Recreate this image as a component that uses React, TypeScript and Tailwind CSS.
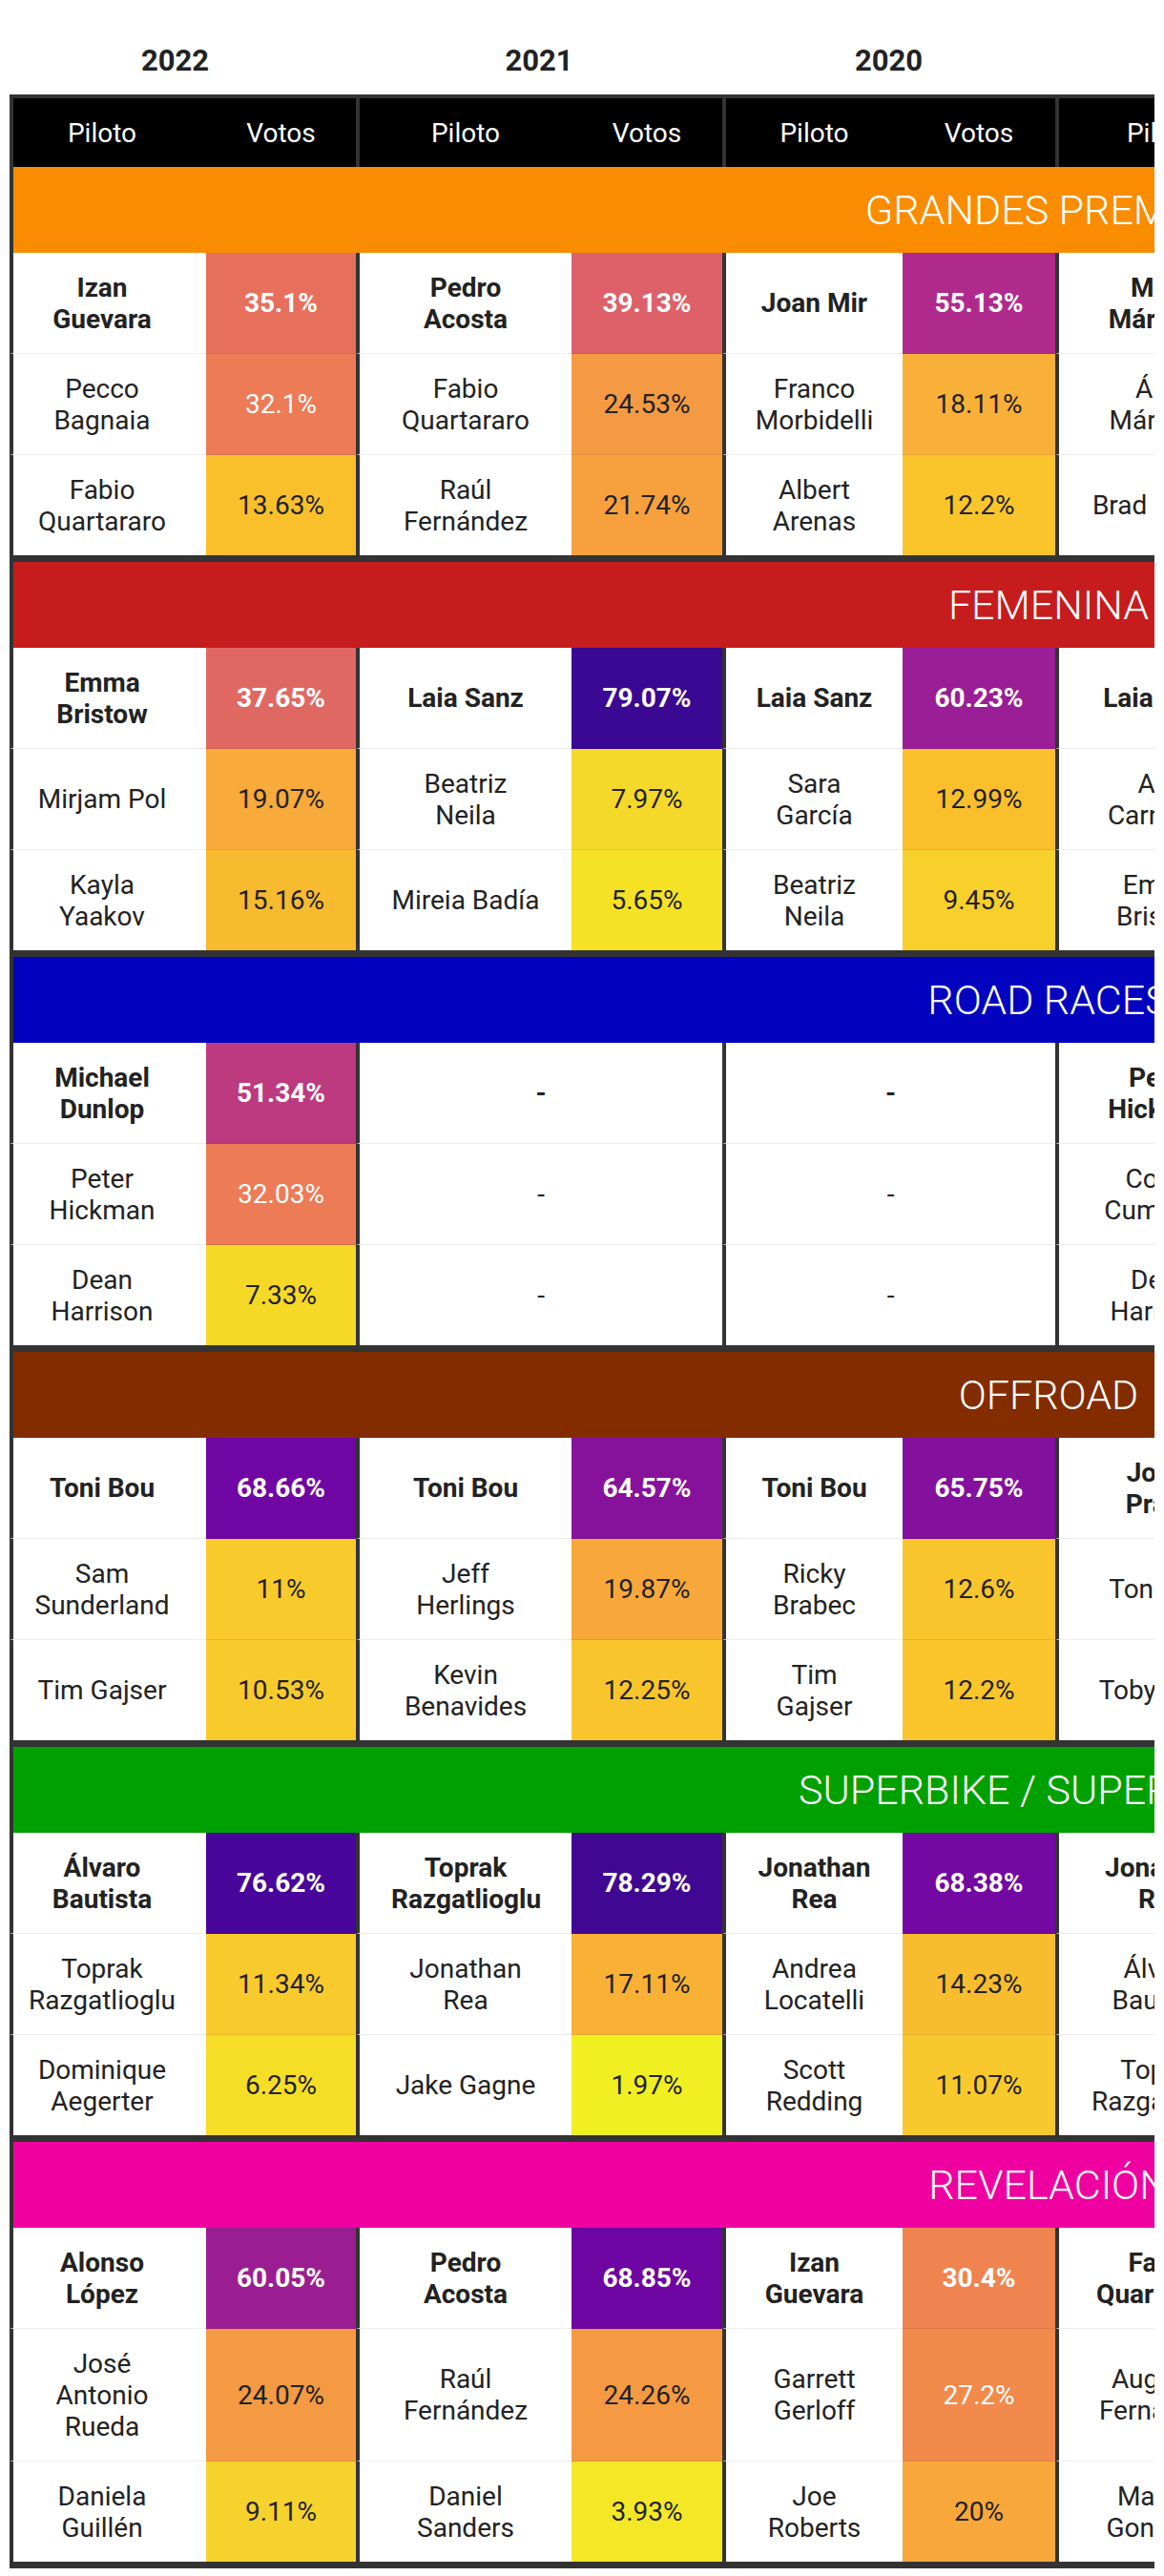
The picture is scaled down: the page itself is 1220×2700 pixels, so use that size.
type Entry = { name: string; pct?: string; bg?: string };
type Column = (Entry | null)[];
type Section = { title: string; bg: string; cols: Column[] };

const YEARS = ["2022", "2021", "2020", "2019"];

// anchos medidos de cada bloque de año (el último se sale de la vista)
const GROUPS = [
  { piloto: "w-[206px]", votos: "w-[157px]", pad: "pl-[14px] pr-[30px]", year: "pr-[16px]" },
  { piloto: "w-[226px]", votos: "w-[158px]", pad: "px-[33px]", year: "" },
  { piloto: "w-[189px]", votos: "w-[160px]", pad: "px-[28px]", year: "" },
  { piloto: "w-[218px]", votos: "", pad: "px-[34px]", year: "" },
];

const SECTIONS: Section[] = [
  {
    title: "GRANDES PREMIOS",
    bg: "bg-[#f98c00]",
    cols: [
      [
        { name: "Izan Guevara", pct: "35.1%", bg: "bg-[#e6705c]" },
        { name: "Pecco Bagnaia", pct: "32.1%", bg: "bg-[#ec7b56]" },
        { name: "Fabio Quartararo", pct: "13.63%", bg: "bg-[#f9c02b]" },
      ],
      [
        { name: "Pedro Acosta", pct: "39.13%", bg: "bg-[#de6069]" },
        { name: "Fabio Quartararo", pct: "24.53%", bg: "bg-[#f49a43]" },
        { name: "Raúl Fernández", pct: "21.74%", bg: "bg-[#f6a13e]" },
      ],
      [
        { name: "Joan Mir", pct: "55.13%", bg: "bg-[#b02a8e]" },
        { name: "Franco Morbidelli", pct: "18.11%", bg: "bg-[#f8b038]" },
        { name: "Albert Arenas", pct: "12.2%", bg: "bg-[#f9c52b]" },
      ],
      [{ name: "Marc Márquez" }, { name: "Álex Márquez" }, { name: "Brad Binder" }],
    ],
  },
  {
    title: "FEMENINA",
    bg: "bg-[#c61c1e]",
    cols: [
      [
        { name: "Emma Bristow", pct: "37.65%", bg: "bg-[#e06862]" },
        { name: "Mirjam Pol", pct: "19.07%", bg: "bg-[#f8aa3a]" },
        { name: "Kayla Yaakov", pct: "15.16%", bg: "bg-[#f8ba2e]" },
      ],
      [
        { name: "Laia Sanz", pct: "79.07%", bg: "bg-[#3a0892]" },
        { name: "Beatriz Neila", pct: "7.97%", bg: "bg-[#f5d92a]" },
        { name: "Mireia Badía", pct: "5.65%", bg: "bg-[#f5e225]" },
      ],
      [
        { name: "Laia Sanz", pct: "60.23%", bg: "bg-[#9a1e96]" },
        { name: "Sara García", pct: "12.99%", bg: "bg-[#fbbf2c]" },
        { name: "Beatriz Neila", pct: "9.45%", bg: "bg-[#f7d02c]" },
      ],
      [{ name: "Laia Sanz" }, { name: "Ana Carrasco" }, { name: "Emma Bristow" }],
    ],
  },
  {
    title: "ROAD RACES",
    bg: "bg-[#0202bf]",
    cols: [
      [
        { name: "Michael Dunlop", pct: "51.34%", bg: "bg-[#bd3a80]" },
        { name: "Peter Hickman", pct: "32.03%", bg: "bg-[#ec7b56]" },
        { name: "Dean Harrison", pct: "7.33%", bg: "bg-[#f6d926]" },
      ],
      [null, null, null],
      [null, null, null],
      [{ name: "Peter Hickman" }, { name: "Conor Cummins" }, { name: "Dean Harrison" }],
    ],
  },
  {
    title: "OFFROAD",
    bg: "bg-[#832c00]",
    cols: [
      [
        { name: "Toni Bou", pct: "68.66%", bg: "bg-[#7006a4]" },
        { name: "Sam Sunderland", pct: "11%", bg: "bg-[#f8ca2c]" },
        { name: "Tim Gajser", pct: "10.53%", bg: "bg-[#f8cb2c]" },
      ],
      [
        { name: "Toni Bou", pct: "64.57%", bg: "bg-[#86129c]" },
        { name: "Jeff Herlings", pct: "19.87%", bg: "bg-[#f8a83a]" },
        { name: "Kevin Benavides", pct: "12.25%", bg: "bg-[#f8c62c]" },
      ],
      [
        { name: "Toni Bou", pct: "65.75%", bg: "bg-[#84109e]" },
        { name: "Ricky Brabec", pct: "12.6%", bg: "bg-[#f8c52c]" },
        { name: "Tim Gajser", pct: "12.2%", bg: "bg-[#f9c52b]" },
      ],
      [{ name: "Jorge Prado" }, { name: "Toni Bou" }, { name: "Toby Price" }],
    ],
  },
  {
    title: "SUPERBIKE / SUPERSPORT",
    bg: "bg-[#00a000]",
    cols: [
      [
        { name: "Álvaro Bautista", pct: "76.62%", bg: "bg-[#48069a]" },
        { name: "Toprak Razgatlioglu", pct: "11.34%", bg: "bg-[#f8ca2c]" },
        { name: "Dominique Aegerter", pct: "6.25%", bg: "bg-[#f6de26]" },
      ],
      [
        { name: "Toprak Razgatlioglu", pct: "78.29%", bg: "bg-[#400892]" },
        { name: "Jonathan Rea", pct: "17.11%", bg: "bg-[#f8b134]" },
        { name: "Jake Gagne", pct: "1.97%", bg: "bg-[#f0ef22]" },
      ],
      [
        { name: "Jonathan Rea", pct: "68.38%", bg: "bg-[#7408a2]" },
        { name: "Andrea Locatelli", pct: "14.23%", bg: "bg-[#f8bd2e]" },
        { name: "Scott Redding", pct: "11.07%", bg: "bg-[#f8c92c]" },
      ],
      [{ name: "Jonathan Rea" }, { name: "Álvaro Bautista" }, { name: "Toprak Razgatlioglu" }],
    ],
  },
  {
    title: "REVELACIÓN",
    bg: "bg-[#ef00a0]",
    cols: [
      [
        { name: "Alonso López", pct: "60.05%", bg: "bg-[#9a1e92]" },
        { name: "José Antonio Rueda", pct: "24.07%", bg: "bg-[#f49a42]" },
        { name: "Daniela Guillén", pct: "9.11%", bg: "bg-[#f6d22c]" },
      ],
      [
        { name: "Pedro Acosta", pct: "68.85%", bg: "bg-[#6e04a2]" },
        { name: "Raúl Fernández", pct: "24.26%", bg: "bg-[#f59a42]" },
        { name: "Daniel Sanders", pct: "3.93%", bg: "bg-[#f4e826]" },
      ],
      [
        { name: "Izan Guevara", pct: "30.4%", bg: "bg-[#f08450]" },
        { name: "Garrett Gerloff", pct: "27.2%", bg: "bg-[#f28a4c]" },
        { name: "Joe Roberts", pct: "20%", bg: "bg-[#f8a83a]" },
      ],
      [{ name: "Fabio Quartararo" }, { name: "Augusto Fernández" }, { name: "Manuel González" }],
    ],
  },
];

const cell = "py-[19.5px] text-center align-middle text-[28px] leading-[33px]";

function DataRow({ section, row }: { section: Section; row: number }) {
  const winner = row === 0;
  const bottom =
    row === 2 ? "border-b-[7px] border-b-[#333]" : "border-b border-b-black/[0.07]";

  return (
    <tr>
      {section.cols.map((col, g) => {
        const entry = col[row];
        const group = GROUPS[g];
        if (!entry) {
          return (
            <td
              key={g}
              colSpan={2}
              className={`${cell} ${bottom} border-l-4 border-l-[#333] bg-white text-[#222] ${winner ? "font-bold" : ""}`}
            >
              -
            </td>
          );
        }
        const light = entry.pct ? parseFloat(entry.pct) > 25 : false;
        return [
          <td
            key={`${g}-p`}
            className={`${cell} ${bottom} ${group.pad} border-l-4 border-l-[#333] bg-white text-[#222] ${winner ? "font-bold" : ""}`}
          >
            {entry.name}
          </td>,
          <td
            key={`${g}-v`}
            className={`${cell} ${bottom} px-[10px] ${entry.bg ?? "bg-white"} ${light ? "text-white" : "text-[#222]"} ${winner ? "font-bold" : ""}`}
          >
            {entry.pct}
          </td>,
        ];
      })}
    </tr>
  );
}

export default function App() {
  return (
    <div className="min-h-[2700px] bg-white px-[10px] pt-[25px] font-['Roboto','Liberation_Sans',sans-serif]">
      <div className="overflow-hidden">
        <table className="w-[2174px] table-fixed border-separate border-spacing-0">
          <colgroup>
            {GROUPS.map((g, i) => [
              <col key={`${i}-p`} className={g.piloto} />,
              <col key={`${i}-v`} className={g.votos} />,
            ])}
          </colgroup>
          <thead>
            <tr>
              {YEARS.map((year, i) => (
                <th
                  key={year}
                  colSpan={2}
                  className={`pt-[20px] pb-[17px] text-center text-[31px] font-bold leading-[normal] text-[#222] ${GROUPS[i].year}`}
                >
                  {year}
                </th>
              ))}
            </tr>
            <tr className="bg-black">
              {GROUPS.map((g, i) => [
                <th
                  key={`${i}-p`}
                  className={`${cell} ${g.pad} border-t-4 border-l-4 border-[#333] bg-black font-normal text-white`}
                >
                  Piloto
                </th>,
                <th
                  key={`${i}-v`}
                  className={`${cell} border-t-4 border-t-[#333] bg-black px-[10px] font-normal text-white`}
                >
                  Votos
                </th>,
              ])}
            </tr>
          </thead>
          {SECTIONS.map((section) => (
            <tbody key={section.title}>
              <tr>
                <td
                  colSpan={8}
                  className={`${section.bg} border-l-4 border-l-[#333] py-[20px] text-center text-[43px] font-light leading-[50px] text-white`}
                >
                  {section.title}
                </td>
              </tr>
              {[0, 1, 2].map((row) => (
                <DataRow key={row} section={section} row={row} />
              ))}
            </tbody>
          ))}
        </table>
      </div>
    </div>
  );
}
